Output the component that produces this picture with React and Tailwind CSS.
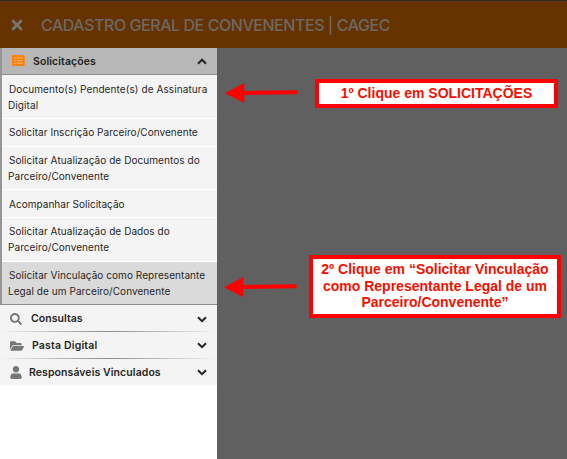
import React from "react";
import { FaTimes, FaSearch, FaFolderOpen, FaUser } from "react-icons/fa";

function Chevron({ up }) {
  return (
    <svg viewBox="0 0 10 7" className="h-[7px] w-[10px] shrink-0" fill="none" stroke="#222" strokeWidth="2">
      <path d={up ? "M1 5.7 L5 1.7 L9 5.7" : "M1 1.2 L5 5.2 L9 1.2"} />
    </svg>
  );
}

function ListIcon() {
  return (
    <svg viewBox="0 0 13 11" className="-mt-px h-[11px] w-[13px]">
      <rect width="12.7" height="11" rx="1.3" fill="#ff8000" />
      <g fill="#e5c8a8">
        <rect x="2.2" y="2.3" width="1.3" height="1.1" />
        <rect x="4.6" y="2.4" width="6" height="0.9" />
        <rect x="2.2" y="4.9" width="1.3" height="1.1" />
        <rect x="4.6" y="5" width="6" height="0.9" />
        <rect x="2.2" y="7.5" width="1.3" height="1.1" />
        <rect x="4.6" y="7.6" width="6" height="0.9" />
      </g>
    </svg>
  );
}

const items = [
  { lines: ["Documento(s) Pendente(s) de Assinatura", "Digital"], box: "h-[44px] border-white bg-[#f4f4f4] pt-[6px] tracking-[0.09px]" },
  { lines: ["Solicitar Inscrição Parceiro/Convenente"], box: "h-[28px] border-white bg-[#f4f4f4] pt-[5px] tracking-[0.05px]" },
  { lines: ["Solicitar Atualização de Documentos do", "Parceiro/Convenente"], box: "h-[43px] border-white bg-[#f4f4f4] pt-[5px] tracking-[0.07px]" },
  { lines: ["Acompanhar Solicitação"], box: "h-[28px] border-white bg-[#f4f4f4] pt-[6px] tracking-[0.03px]" },
  { lines: ["Solicitar Atualização de Dados do", "Parceiro/Convenente"], box: "h-[44px] border-white bg-[#f4f4f4] pt-[5px] tracking-[0.07px]" },
  { lines: ["Solicitar Vinculação como Representante", "Legal de um Parceiro/Convenente"], box: "h-[43px] border-[#8d8d8d] bg-[#dadada] pt-[5px] tracking-[0.06px]" },
];

function Section({ icon, label, rowClass, labelClass, last }) {
  return (
    <div className="bg-[#f4f4f4]">
      <div className={`flex h-[26px] items-center pl-[10px] pr-[10px] ${rowClass}`}>
        <span className="flex w-[15px] items-center text-[#777]">{icon}</span>
        <span className={`flex-1 whitespace-nowrap text-[10.5px] font-semibold leading-4 text-[#262626] ${labelClass}`}>{label}</span>
        <Chevron />
      </div>
      {!last && <div className="h-px bg-linear-to-r from-[#f4f4f4] via-[#8c8c8c] to-[#f4f4f4]" />}
    </div>
  );
}

function Arrow() {
  return (
    <svg viewBox="0 0 73 20" className="h-[20px] w-[73px] shrink-0" fill="#ff0000">
      <path d="M0 10.3 L19.3 0 V7.9 L72.5 7.3 V11.3 L19.3 12 V20 Z" />
    </svg>
  );
}

export default function App() {
  return (
    <div className="flex h-[459px] w-[567px] flex-col overflow-hidden bg-[#606060] font-['Inter',sans-serif]">
      <header className="flex h-[48px] shrink-0 items-center border-t border-[#2d2d2d] bg-[#653200] pl-[11px] text-[#747474]">
        <FaTimes className="h-[16px] w-[12px]" />
        <h1 className="ml-[18px] whitespace-nowrap text-[16px] font-medium leading-5 tracking-[-0.45px] text-[#6c6865]">
          CADASTRO GERAL DE CONVENENTES | CAGEC
        </h1>
      </header>
      <div className="flex min-h-0 flex-1">
        <aside className="w-[217px] shrink-0 bg-white">
          <div className="border-l-2 border-[#969696]">
            <div className="flex h-[27px] items-center border-b border-[#8d8d8d] bg-[#b7b7b7] pl-[10px] pr-[10px]">
              <ListIcon />
              <span className="ml-[8px] flex-1 pt-[2px] text-[10.5px] font-semibold leading-4 tracking-[0.08px] text-[#222]">Solicitações</span>
              <Chevron up />
            </div>
            {items.map((item, i) => (
              <div key={i} className={`border-b pl-[6px] text-[10px] leading-4 text-[#262626] ${item.box}`}>
                {item.lines.map((line, n) => (
                  <div key={n} className={`whitespace-nowrap ${n === 0 ? "pl-px" : ""}`}>{line}</div>
                ))}
              </div>
            ))}
          </div>
          <Section icon={<FaSearch className="h-[12px] w-[12px]" />} label="Consultas" rowClass="pt-[2px]" labelClass="pl-[6px] tracking-[0.05px]" />
          <Section icon={<FaFolderOpen className="h-[14px] w-[14px]" />} label="Pasta Digital" rowClass="pt-px" labelClass="pl-[7px] tracking-[0.18px]" />
          <Section icon={<FaUser className="h-[13px] w-[12px]" />} label="Responsáveis Vinculados" rowClass="pt-px" labelClass="pl-[4px] tracking-[0.08px]" last />
        </aside>
        <main className="flex flex-1 flex-col font-['Liberation_Sans',Arial,sans-serif] text-[14px] font-bold text-[#f41000]">
          <div className="mt-[31px] flex h-[29px] items-start pl-[8px]">
            <div className="pt-[4px]"><Arrow /></div>
            <div className="ml-[17px] flex h-[29px] w-[243px] items-center justify-center whitespace-nowrap border-4 border-[#ff0000] bg-white">
              1º Clique em SOLICITAÇÕES
            </div>
          </div>
          <div className="mt-[147px] flex h-[63px] items-center pl-[7px]">
            <Arrow />
            <div className="ml-[12px] h-[63px] w-[252px] whitespace-nowrap border-4 border-[#ff0000] bg-white pt-[2px] text-center leading-[16.5px]">
              <div>2º Clique em “Solicitar Vinculação</div>
              <div>como Representante Legal de um</div>
              <div>Parceiro/Convenente”</div>
            </div>
          </div>
        </main>
      </div>
    </div>
  );
}
